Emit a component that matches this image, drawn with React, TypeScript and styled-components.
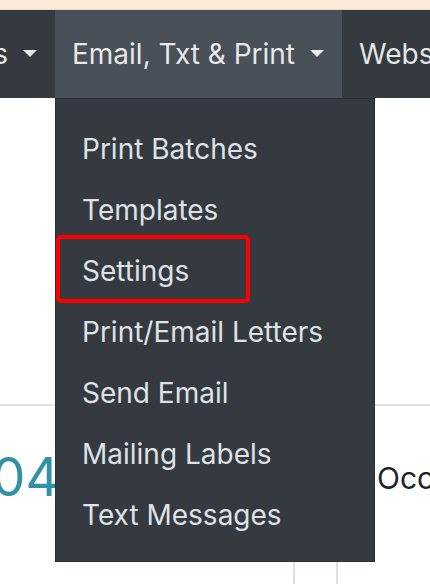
import styled, { createGlobalStyle } from "styled-components";

const GlobalStyle = createGlobalStyle`
  html, body {
    margin: 0;
    padding: 0;
    background: #ffffff;
    overflow: hidden;
  }
  body {
    font-family: Inter, "Noto Sans", "Liberation Sans", sans-serif;
    -webkit-font-smoothing: antialiased;
  }
`;

const Page = styled.div`
  width: 430px;
  height: 584px;
  overflow: hidden;
  display: flex;
  flex-direction: column;
`;

const Alert = styled.div`
  height: 10px;
  background: #fde9d9;
  border-bottom: 1px solid #f7d9c3;
  box-sizing: border-box;
`;

const NavBar = styled.nav`
  height: 88px;
  background: #343a40;
  display: flex;
  align-items: stretch;
  position: relative;
  z-index: 2;
`;

const NavItem = styled.div<{ $active?: boolean; $clipStart?: boolean }>`
  position: relative;
  display: flex;
  align-items: center;
  flex-shrink: 0;
  padding: 0 18px 0 17px;
  font-size: 28px;
  color: rgba(255, 255, 255, 0.88);
  white-space: nowrap;
  background: ${(p) => (p.$active ? "#495057" : "transparent")};
  ${(p) =>
    p.$clipStart &&
    `
    width: 55px;
    box-sizing: border-box;
    justify-content: flex-end;
    overflow: hidden;
  `}
`;

const Caret = styled.span`
  display: inline-block;
  margin-left: 15px;
  margin-top: -2px;
  width: 0;
  height: 0;
  border-top: 7px solid currentColor;
  border-left: 7px solid transparent;
  border-right: 7px solid transparent;
`;

const Dropdown = styled.div`
  position: absolute;
  top: 100%;
  left: 0;
  width: 320px;
  box-sizing: border-box;
  background: #343a40;
  border: 1px solid #2a2e34;
  padding: 19px 0 16px;
  display: flex;
  flex-direction: column;
`;

const MenuItem = styled.div`
  position: relative;
  height: 61px;
  display: flex;
  align-items: center;
  padding-left: 26px;
  font-size: 28px;
  color: #dee2e6;
  white-space: nowrap;
`;

const Highlight = styled.span`
  position: absolute;
  left: 0;
  top: -5px;
  width: 194px;
  height: 68px;
  box-sizing: border-box;
  border: 4px solid #ff0000;
  border-radius: 5px;
`;

const Content = styled.main`
  flex: 1;
  padding-top: 306px;
  display: flex;
  flex-direction: column;
`;

const Section = styled.section`
  border-top: 2px solid #e4e4e4;
  flex: 1;
  display: flex;
  flex-direction: column;
`;

const StatRow = styled.div`
  display: flex;
  align-items: flex-start;
  padding-top: 45px;
  height: 70px;
`;

const StatNumber = styled.div`
  font-size: 53px;
  line-height: 1;
  color: #2f92a5;
  margin-left: -8px;
`;

const StatLabel = styled.div`
  margin-left: auto;
  width: 53px;
  overflow: hidden;
  white-space: nowrap;
  margin-top: 12px;
  font-size: 30px;
  line-height: 1;
  color: #212529;
`;

const TableRow = styled.div`
  flex: 1;
  display: grid;
  grid-template-columns: 293px 43px 1fr;
`;

const Cell = styled.div<{ $bordered?: boolean }>`
  border-left: ${(p) => (p.$bordered ? "2px solid #dedede" : "none")};
`;

const menu = [
  "Print Batches",
  "Templates",
  "Settings",
  "Print/Email Letters",
  "Send Email",
  "Mailing Labels",
  "Text Messages",
];

export default function App() {
  return (
    <Page>
      <GlobalStyle />
      <Alert />
      <NavBar>
        <NavItem $clipStart>
          Reports
          <Caret />
        </NavItem>
        <NavItem $active>
          Email, Txt &amp; Print
          <Caret />
          <Dropdown>
            {menu.map((label) => (
              <MenuItem key={label}>
                {label === "Settings" && <Highlight />}
                {label}
              </MenuItem>
            ))}
          </Dropdown>
        </NavItem>
        <NavItem>Website</NavItem>
      </NavBar>
      <Content>
        <Section>
          <StatRow>
            <StatNumber>04</StatNumber>
            <StatLabel>Occupied</StatLabel>
          </StatRow>
          <TableRow>
            <Cell />
            <Cell $bordered />
            <Cell $bordered />
          </TableRow>
        </Section>
      </Content>
    </Page>
  );
}
